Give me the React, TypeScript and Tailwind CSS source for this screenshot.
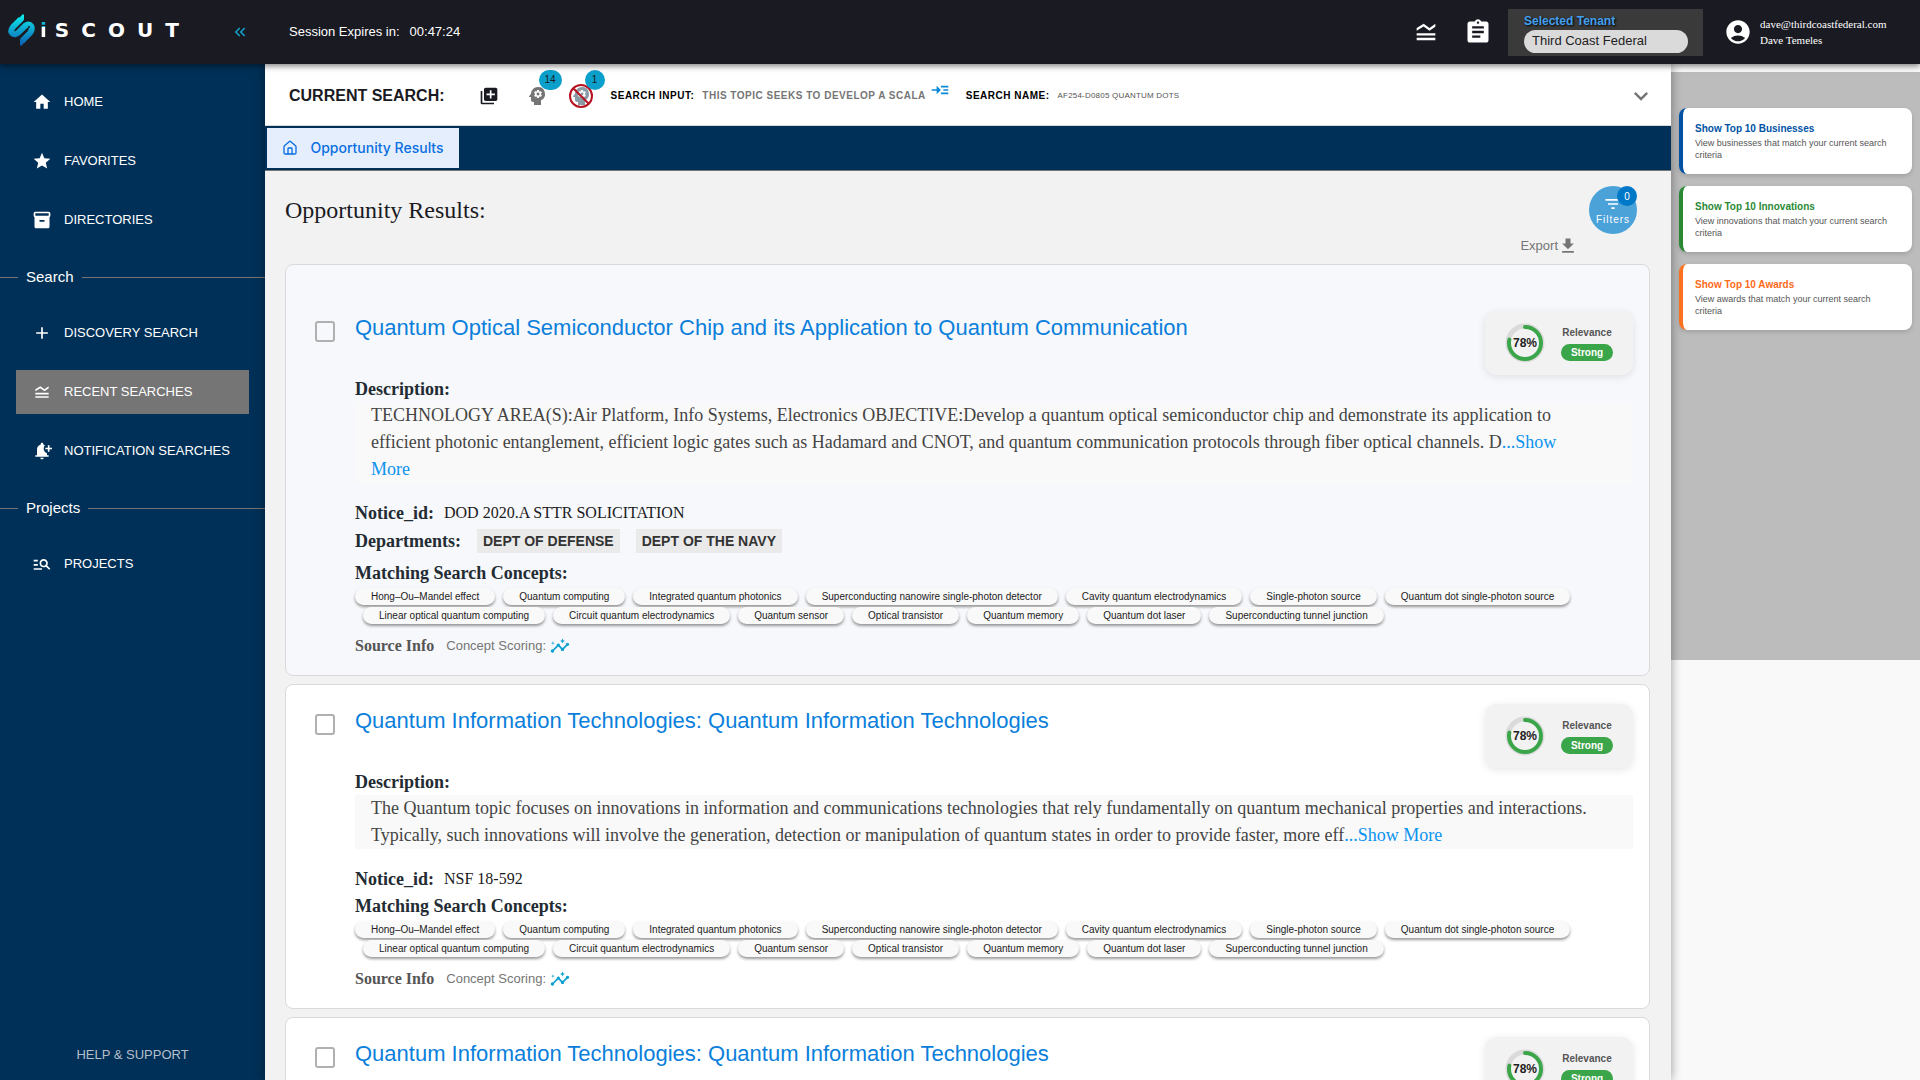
import React from 'react';
import {
  MdHome, MdStar, MdInventory2, MdAdd, MdLegendToggle, MdNotificationAdd, MdManageSearch, MdAssignment,
  MdAccountCircle, MdLibraryAdd, MdPsychology, MdExpandMore, MdKeyboardDoubleArrowLeft, MdDownload,
  MdFilterList, MdInsights, MdReadMore,
} from 'react-icons/md';
import { House } from 'lucide-react';
import type { IconType } from 'react-icons';

interface NavItem {
  label: string;
  icon: IconType;
  active?: boolean;
}

interface Result {
  id: number;
  title: string;
  description: string;
  noticeId: string;
  departments?: string[];
  score: number;
  viewed?: boolean;
}

const mainNav: NavItem[] = [
  { label: 'HOME', icon: MdHome },
  { label: 'FAVORITES', icon: MdStar },
  { label: 'DIRECTORIES', icon: MdInventory2 },
];

const searchNav: NavItem[] = [
  { label: 'DISCOVERY SEARCH', icon: MdAdd },
  { label: 'RECENT SEARCHES', icon: MdLegendToggle, active: true },
  { label: 'NOTIFICATION SEARCHES', icon: MdNotificationAdd },
];

const projectNav: NavItem[] = [{ label: 'PROJECTS', icon: MdManageSearch }];

const conceptRows = [
  [
    'Hong–Ou–Mandel effect', 'Quantum computing', 'Integrated quantum photonics',
    'Superconducting nanowire single-photon detector', 'Cavity quantum electrodynamics',
    'Single-photon source', 'Quantum dot single-photon source',
  ],
  [
    'Linear optical quantum computing', 'Circuit quantum electrodynamics', 'Quantum sensor',
    'Optical transistor', 'Quantum memory', 'Quantum dot laser', 'Superconducting tunnel junction',
  ],
];

const quantumInfo = {
  title: 'Quantum Information Technologies: Quantum Information Technologies',
  description:
    'The Quantum topic focuses on innovations in information and communications technologies that rely fundamentally on quantum mechanical properties and interactions. Typically, such innovations will involve the generation, detection or manipulation of quantum states in order to provide faster, more eff',
  noticeId: 'NSF 18-592',
  score: 78,
};

const results: Result[] = [
  {
    id: 1,
    title: 'Quantum Optical Semiconductor Chip and its Application to Quantum Communication',
    description:
      'TECHNOLOGY AREA(S):Air Platform, Info Systems, Electronics OBJECTIVE:Develop a quantum optical semiconductor chip and demonstrate its application to efficient photonic entanglement, efficient logic gates such as Hadamard and CNOT, and quantum communication protocols through fiber optical channels. D',
    noticeId: 'DOD 2020.A STTR SOLICITATION',
    departments: ['DEPT OF DEFENSE', 'DEPT OF THE NAVY'],
    score: 78,
    viewed: true,
  },
  { id: 2, ...quantumInfo },
  { id: 3, ...quantumInfo },
];

const topLists = [
  { name: 'Businesses', text: 'View businesses that match your current search criteria', border: 'border-[#0052a5]', color: 'text-[#0052a5]' },
  { name: 'Innovations', text: 'View innovations that match your current search criteria', border: 'border-[#2b8a36]', color: 'text-[#2b8a36]' },
  { name: 'Awards', text: 'View awards that match your current search criteria', border: 'border-[#ff7420]', color: 'text-[#ff6a1a]' },
];

const Logo: React.FC = () => (
  <a href="#home" className="flex items-center gap-1">
    <svg width="28" height="32" viewBox="0 0 28 32" fill="none">
      <defs>
        <linearGradient id="mark" x1="0" y1="0" x2="0" y2="32" gradientUnits="userSpaceOnUse">
          <stop offset="0" stopColor="#08f3ee" />
          <stop offset="0.5" stopColor="#0ea3cf" />
          <stop offset="1" stopColor="#0b5cb0" />
        </linearGradient>
      </defs>
      <path
        stroke="url(#mark)"
        strokeWidth="6"
        d="M13 5 L5 13 Q2 17 4 19 Q7 22 11 18 L17 12 Q21 9 23 12 Q25 15 22 19 L14 27"
      />
      <path fill="url(#mark)" d="M10 5 L15 0 L16 1 V6 L13 8 Z M12 26 L16 23 L18 27 L13 32 L12 31 Z" />
      <circle cx="21" cy="13" r="1" fill="#1a1a22" />
    </svg>
    <span className="font-['DejaVu_Sans',sans-serif] text-xl leading-6 font-bold tracking-[12px]">
      <span className="bg-[linear-gradient(#12b4d0_38%,#fff_38%)] bg-clip-text tracking-[8px] text-transparent">i</span>SCOUT
    </span>
  </a>
);

const NavList: React.FC<{ items: NavItem[] }> = ({ items }) => (
  <ul className="flex flex-col gap-[15px]">
    {items.map(({ label, icon: Icon, active }) => (
      <li key={label} className="px-4">
        <a
          href="#nav"
          className={`flex h-11 items-center gap-3 px-4 text-[13px] whitespace-nowrap text-white ${active ? 'bg-[#757575]' : ''}`}
        >
          <Icon className="h-5 w-5 shrink-0" />
          <span>{label}</span>
        </a>
      </li>
    ))}
  </ul>
);

const SectionLabel: React.FC<{ children: React.ReactNode }> = ({ children }) => (
  <div className="flex items-center gap-2 pt-[23px] pb-[22px] text-white">
    <span className="h-px w-[18px] bg-[#757575]" />
    <h2 className="text-[15px] leading-6">{children}</h2>
    <span className="h-px flex-1 bg-[#757575]" />
  </div>
);

const Relevance: React.FC<{ score: number }> = ({ score }) => {
  const length = 2 * Math.PI * 16;

  return (
    <div className="flex h-16 w-[148px] shrink-0 items-center gap-4 rounded-xl bg-[#f2f2f2] pl-5 shadow-[0_2px_8px_rgba(0,0,0,0.1)]">
      <div className="relative h-10 w-10">
        <svg viewBox="0 0 40 40" className="h-10 w-10 -rotate-90" fill="none">
          <circle cx="20" cy="20" r="17" stroke="#dadada" strokeWidth="5" />
          <circle
            cx="20" cy="20" r="16" stroke="#3ba54a" strokeWidth="4" strokeLinecap="round"
            strokeDasharray={`${(length * score) / 100} ${length}`}
          />
        </svg>
        <span className="absolute inset-0 flex items-center justify-center text-xs font-bold text-[#222]">{score}%</span>
      </div>
      <div className="flex flex-col items-center gap-[3px]">
        <span className="text-[10px] leading-4 font-bold text-[#555]">Relevance</span>
        <span className="h-[17px] w-[52px] rounded-full bg-[#3ba54a] text-center text-[10px] leading-[17px] font-bold text-white">
          Strong
        </span>
      </div>
    </div>
  );
};

const ResultCard: React.FC<{ result: Result }> = ({ result }) => (
  <article
    className={`rounded-lg border border-[#dadada] pr-4 pb-[19px] pl-[29px] ${
      result.viewed ? 'bg-[#f7f8fb] pt-[46px]' : 'bg-white pt-[19px]'
    }`}
  >
    <div className="flex items-start">
      <input
        type="checkbox"
        aria-label={`Select ${result.title}`}
        className="mt-[10px] h-[21px] w-5 shrink-0 appearance-none rounded-[3px] border-2 border-[#b0b0b0]"
      />
      <a href="#result" className="ml-5 flex-1 text-[22px] leading-[34px] text-[#0b7fdb]">
        {result.title}
      </a>
      <Relevance score={result.score} />
    </div>

    <div className="ml-10 font-['Liberation_Serif',serif] text-[#232b33]">
      <h3 className="mt-[3px] text-lg leading-[22px] font-bold">Description:</h3>
      <p className="mt-[2px] bg-[#f9f9f9] pr-9 pl-4 text-lg leading-[27px] text-[#444]">
        {result.description}
        <a href="#more" className="text-[#0b93ee]">...Show More</a>
      </p>

      <div className="mt-4 flex h-7 items-center gap-[10px]">
        <h3 className="text-lg font-bold">Notice_id:</h3>
        <span className="text-base text-[#1a1a22]">{result.noticeId}</span>
      </div>
      {result.departments && (
        <div className="mb-[5px] flex h-7 items-center gap-4">
          <h3 className="text-lg font-bold">Departments:</h3>
          <div className="flex gap-4 font-['Liberation_Sans',sans-serif]">
            {result.departments.map(name => (
              <span key={name} className="bg-[#eaeaea] px-[6px] text-sm leading-6 font-bold text-[#333]">{name}</span>
            ))}
          </div>
        </div>
      )}
      <h3 className="text-lg leading-[26px] font-bold">Matching Search Concepts:</h3>
      <div className="font-['Liberation_Sans',sans-serif]">
        {conceptRows.map((row, index) => (
          <ul key={row[0]} className={`flex gap-2 pt-[2px] ${index > 0 ? 'pl-2' : ''}`}>
            {row.map(concept => (
              <li
                key={concept}
                className="rounded-full bg-[#f9f9f9] px-4 text-[10px] leading-[17px] text-[#222] shadow-[0_2px_3px_rgba(0,0,0,0.4)]"
              >
                {concept}
              </li>
            ))}
          </ul>
        ))}
      </div>
      <div className="mt-3 flex h-5 items-center gap-3">
        <span className="text-base font-bold text-[#555]">Source Info</span>
        <span className="flex items-center gap-1 font-['Liberation_Sans',sans-serif] text-[13px] text-[#757575]">
          Concept Scoring: <MdInsights className="h-5 w-5 text-[#0ba0d0]" />
        </span>
      </div>
    </div>
  </article>
);

const App: React.FC = () => {
  return (
    <div className="flex h-screen flex-col overflow-hidden bg-[#f9f9f9] font-['Liberation_Sans',Arial,sans-serif]">
      {/* Top bar */}
      <header className="z-20 flex h-16 shrink-0 items-center bg-[#1a1a22] text-white shadow-[0_2px_6px_rgba(0,0,0,0.5)]">
        <div className="flex w-[265px] items-center justify-between pr-4 pb-1 pl-2">
          <Logo />
          <button type="button" aria-label="Collapse menu" className="pt-1 text-[#12a4ce]">
            <MdKeyboardDoubleArrowLeft className="h-[18px] w-[18px]" />
          </button>
        </div>
        <div className="flex gap-[10px] pl-6 text-[13px]">
          <span>Session Expires in:</span>
          <span>00:47:24</span>
        </div>

        <div className="ml-auto flex items-center">
          <button type="button" aria-label="Recent searches" className="mr-6">
            <MdLegendToggle className="h-7 w-7" />
          </button>
          <button type="button" aria-label="Tasks" className="mr-4">
            <MdAssignment className="h-7 w-7" />
          </button>
          <div className="flex h-[47px] w-[195px] flex-col justify-center bg-[#3a3a3a] px-4">
            <label htmlFor="tenant" className="text-xs leading-[18px] font-bold text-[#42a0ee] [text-shadow:1px_1px_2px_#000]">
              Selected Tenant
            </label>
            <select id="tenant" className="h-[23px] w-[164px] appearance-none rounded-full bg-[#dadada] px-2 text-[13px] text-[#222]">
              <option>Third Coast Federal</option>
            </select>
          </div>
          <MdAccountCircle className="mr-2 ml-[21px] h-7 w-7" />
          <div className="w-[160px] font-['Liberation_Serif',serif] text-[11px] leading-4">
            <div>dave@thirdcoastfederal.com</div>
            <div>Dave Temeles</div>
          </div>
        </div>
      </header>

      <div className="flex min-h-0 flex-1">
        {/* Sidebar */}
        <nav className="flex w-[265px] shrink-0 flex-col bg-[#003057] pt-4">
          <NavList items={mainNav} />
          <SectionLabel>Search</SectionLabel>
          <NavList items={searchNav} />
          <SectionLabel>Projects</SectionLabel>
          <NavList items={projectNav} />
          <a href="#help" className="mt-auto pb-4 text-center text-[13px] text-[#b5bfca]">HELP &amp; SUPPORT</a>
        </nav>

        <main className="z-10 flex min-w-0 flex-1 flex-col bg-[#f2f2f2] shadow-[0_0_10px_rgba(0,0,0,0.4)]">
          {/* Current search */}
          <section className="flex h-[62px] shrink-0 items-center border-b border-[#dadada] bg-white pt-[2px] pr-4 pl-6">
            <h1 className="text-base font-bold text-[#1a1a22]">CURRENT SEARCH:</h1>
            <button type="button" aria-label="Add to library" className="ml-[34px] text-[#1a1a22]">
              <MdLibraryAdd className="h-5 w-5" />
            </button>
            <button type="button" aria-label="14 concepts" className="relative ml-[26px] text-[#757575]">
              <MdPsychology className="h-6 w-6" />
              <span className="absolute -top-[14px] left-[14px] flex h-5 w-[23px] items-center justify-center rounded-full bg-[#0ba0cc] text-[10px] text-[#1a1a22]">14</span>
            </button>
            <button type="button" aria-label="1 excluded concept" className="relative ml-5 text-[#8a9ba5]">
              <MdPsychology className="h-6 w-6" />
              <svg viewBox="0 0 24 24" className="absolute inset-0 h-6 w-6" fill="none" stroke="#b5121f" strokeWidth="2">
                <circle cx="12" cy="12" r="11" />
                <path d="M4 4 L20 20" />
              </svg>
              <span className="absolute -top-[14px] left-4 flex h-5 w-5 items-center justify-center rounded-full bg-[#0ba0cc] text-[10px] text-[#1a1a22]">1</span>
            </button>
            <div className="ml-[18px] flex items-center text-[10px] font-bold tracking-wider">
              <span className="text-black">SEARCH INPUT:</span>
              <span className="ml-2 text-[#757575]">THIS TOPIC SEEKS TO DEVELOP A SCALA</span>
              <button type="button" aria-label="Read more" className="mb-3 ml-1 text-[#0b88d6]">
                <MdReadMore className="h-5 w-5" />
              </button>
              <span className="ml-4 text-black">SEARCH NAME:</span>
              <span className="ml-2 text-[8px] font-normal tracking-wide text-[#555]">AF254-D0805 QUANTUM DOTS</span>
            </div>
            <button type="button" aria-label="Expand" className="ml-auto text-[#757575]">
              <MdExpandMore className="h-7 w-7" />
            </button>
          </section>

          {/* Tabs */}
          <div className="flex h-[45px] shrink-0 border-b border-[#757575] bg-[#003057] py-[2px] pl-[2px]">
            <button type="button" className="flex h-10 w-48 items-center justify-center gap-3 bg-[#e5eefd] font-['Inter',sans-serif] text-sm font-medium text-[#0b6fe0]">
              <House className="h-4 w-4" />
              Opportunity Results
            </button>
          </div>

          <div className="min-h-0 flex-1 overflow-y-auto pt-[15px] pr-[21px] pl-5 [scrollbar-width:none]">
            <div className="flex h-12 items-center justify-between pr-[13px]">
              <h2 className="font-['Liberation_Serif',serif] text-2xl text-[#1a1a22]">Opportunity Results:</h2>
              <button type="button" className="relative flex h-12 w-12 flex-col items-center justify-center rounded-full bg-[#4aa2d9] text-white">
                <MdFilterList className="h-5 w-5" />
                <span className="text-[10px] leading-3 tracking-widest">Filters</span>
                <span className="absolute top-0 right-0 flex h-5 w-5 items-center justify-center rounded-full bg-[#0078c8] text-[10px]">0</span>
              </button>
            </div>
            <div className="flex h-[30px] justify-end pr-[72px]">
              <button type="button" className="flex h-6 items-center text-[13px] text-[#757575]">
                Export <MdDownload className="h-5 w-5" />
              </button>
            </div>
            <div className="flex flex-col gap-2">
              {results.map(result => (
                <ResultCard key={result.id} result={result} />
              ))}
            </div>
          </div>
        </main>

        {/* Top 10 panel */}
        <aside className="w-[249px] shrink-0 pt-2">
          <div className="flex h-[588px] flex-col gap-3 bg-[#bcbcbc] px-2 pt-9">
            {topLists.map(({ name, text, border, color }) => (
              <button
                key={name}
                type="button"
                className={`h-[66px] rounded-lg border-l-4 bg-white pr-5 pl-3 text-left shadow-[0_2px_4px_rgba(0,0,0,0.15)] ${border}`}
              >
                <span className={`block text-[10px] leading-4 font-bold ${color}`}>Show Top 10 {name}</span>
                <span className="block text-[9px] leading-3 text-[#555]">{text}</span>
              </button>
            ))}
          </div>
        </aside>
      </div>
    </div>
  );
};

export default App;
